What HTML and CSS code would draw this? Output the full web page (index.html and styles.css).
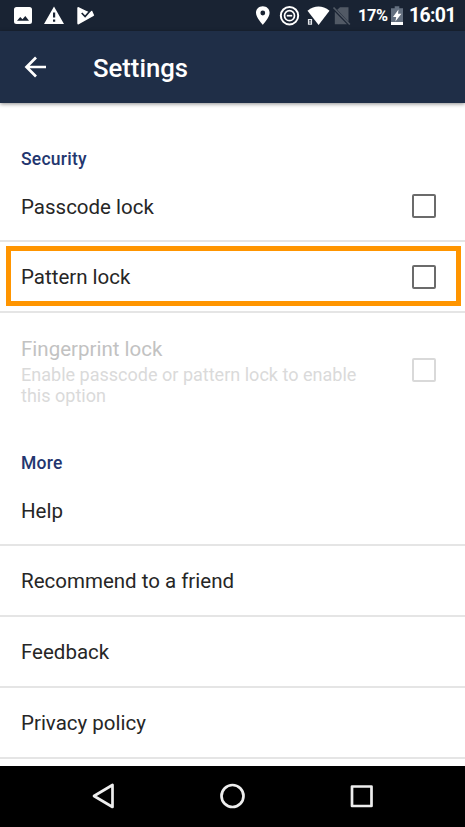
FILE: index.html
```html
<!DOCTYPE html>
<html lang="en">
<head>
<meta charset="utf-8">
<title>Settings</title>
<link rel="stylesheet" href="styles.css">
</head>
<body>
<div class="screen">
  <header class="status">
    <svg class="status-left" width="100" height="31" viewBox="0 0 100 31">
      <path fill="#fff" fill-rule="evenodd" d="M16.500 7h13q2.500 0 2.500 2.500v12q0 2.500-2.500 2.500h-13q-2.500 0-2.500-2.500v-12Q14 7 16.500 7zM17 20.700h12l-3.700-4.700-2.800 3.200-2.300-2.200z"/>
      <path fill="#fff" fill-rule="evenodd" d="M54 6.500 64 24H44zM53 12.500v5h2.200v-5zM53 19.500v2.200h2.200v-2.200z"/>
      <path fill="#fff" d="M78.300 7 86 10.700 89 12l3-1.500 1.800 4q1 .8-.3 1.500L78.300 24.500q-1 0-1-1.200V8q0-1 1-1z"/>
      <path fill="none" stroke="#192333" stroke-width="1.700" d="m81.700 13 3.400 3.500 6.200-7"/>
    </svg>
    <div class="status-right">
      <svg width="98" height="31" viewBox="254 0 98 31">
        <path fill="#fff" fill-rule="evenodd" d="M262.800 6.300c-4 0-6.800 2.900-6.800 6.500 0 4.900 6.800 12 6.800 12s6.800-7.100 6.800-12c0-3.600-2.800-6.500-6.800-6.500zm0 4.300a2.400 2.400 0 1 1 0 4.800 2.400 2.400 0 0 1 0-4.800z"/>
        <g fill="none" stroke="#fff" stroke-width="2"><circle cx="289.500" cy="15.700" r="8.700"/><circle cx="289.500" cy="15.700" r="5" stroke-width="1.700"/><path stroke-width="1.700" d="M286.800 15.700h5.400"/></g>
        <path fill="#fff" d="M307.500 10.700q11-8.300 22 0L318.600 25z"/>
        <rect x="307.800" y="18.700" width="4.800" height="6.300" rx="1" fill="#192333"/>
        <path stroke="#e4e7eb" fill="none" stroke-width="1.200" d="M308.500 19.700h3v4.500h-3zM308.500 22h3"/>
        <path fill="#515965" d="M340 7.300h8.500v14.500l-11.300-12zM334.800 11.800 347 24.300h-12.200z"/>
        <path stroke="#515965" stroke-width="1.700" d="m333.500 7.500 16.300 17"/>
      </svg>
      <span class="percent">17%</span>
      <svg class="battery" width="14" height="31" viewBox="0 0 14 31">
        <path fill="#647080" d="M4.700 6.300h4.600v1.900H13v16.700H1V8.200h3.700z"/>
        <path fill="#fff" d="M1 22h12v3H1zM8.500 9.500 3 17h3.200l-.8 4.500 6-7.800H8z"/>
      </svg>
      <span class="clock">16:01</span>
    </div>
  </header>
  <div class="toolbar">
    <svg class="back" width="24" height="24" viewBox="0 0 24 24" fill="none" stroke="#fff" stroke-width="2.700"><path d="M23 12H4M13 2.500 3.500 12l9.500 9.500"/></svg>
    <h1>Settings</h1>
  </div>
  <main>
    <section>
      <h2>Security</h2>
      <div class="row first"><span>Passcode lock</span><i class="checkbox"></i></div>
      <div class="row highlighted"><span>Pattern lock</span><i class="checkbox"></i></div>
      <div class="row disabled">
        <div><span>Fingerprint lock</span><p>Enable passcode or pattern lock to enable<br>this option</p></div>
        <i class="checkbox"></i>
      </div>
    </section>
    <section class="more">
      <h2>More</h2>
      <div class="row first"><span>Help</span></div>
      <div class="row"><span>Recommend to a friend</span></div>
      <div class="row"><span>Feedback</span></div>
      <div class="row"><span>Privacy policy</span></div>
    </section>
  </main>
  <nav class="navbar">
    <svg width="465" height="61" viewBox="0 766 465 61" fill="none" stroke="#eee" stroke-width="2.700" stroke-linejoin="round">
      <path d="M112.500 785v22L94 796z"/>
      <circle cx="232.500" cy="796" r="11"/>
      <path d="M352 786.500h19.500V806H352z"/>
    </svg>
  </nav>
</div>
</body>
</html>
```
FILE: styles.css
```css
* { box-sizing: border-box; }
body { margin: 0; font-family: Roboto, "Liberation Sans", sans-serif; background: #fff; color: #262626; }
h1, h2, p { margin: 0; }
.screen { display: flex; flex-direction: column; width: 465px; height: 827px; overflow: hidden; }
.status { display: flex; justify-content: space-between; height: 31px; background: #192333; color: #fff; }
.status svg { display: block; }
.status-right { display: flex; width: 211px; font-weight: 500; line-height: 32px; }
.percent { width: 38px; padding-left: 6px; font-size: 16.300px; letter-spacing: -.4px; font-weight: 700; }
.clock { padding-left: 5px; font-size: 19.500px; letter-spacing: -.7px; font-weight: 700; }
.toolbar { display: flex; align-items: center; height: 72px; padding-left: 23px; background: #1f2e47; color: #fff; box-shadow: 0 1px 4px rgba(0, 0, 0, .45); z-index: 1; }
h1 { padding: 1px 0 0 46px; font-size: 25.700px; font-weight: 500; line-height: 30px; }
main { flex: 1; padding-top: 46px; }
h2 { height: 24px; padding-left: 21px; color: #23366f; font-size: 17.500px; font-weight: 500; letter-spacing: .25px; line-height: 20px; }
.row { display: flex; align-items: center; justify-content: space-between; position: relative; height: 71px; padding: 0 29px 0 21px; border-bottom: 2px solid #e5e5e5; font-size: 20.500px; line-height: 26px; }
.row.first { height: 69px; }
.checkbox { width: 24px; height: 24px; margin-top: -1px; border: 2px solid #6b6b6b; border-radius: 2px; }
.highlighted .checkbox { margin-top: 0; }
.highlighted::after { content: ""; position: absolute; inset: 4px 4px 5px 6px; border: 5px solid #ff9500; }
.row.disabled { height: 116px; border: 0; color: #c2c2c2; }
.disabled span { display: block; margin-top: -1px; }
.disabled p { padding-top: 2px; color: #dadada; font-size: 18.050px; line-height: 21px; }
.disabled .checkbox { margin-top: -3px; border-color: #d9d9d9; }
.more { padding-top: 24px; }
.navbar { height: 61px; background: #000; }
.navbar svg { display: block; }
```
